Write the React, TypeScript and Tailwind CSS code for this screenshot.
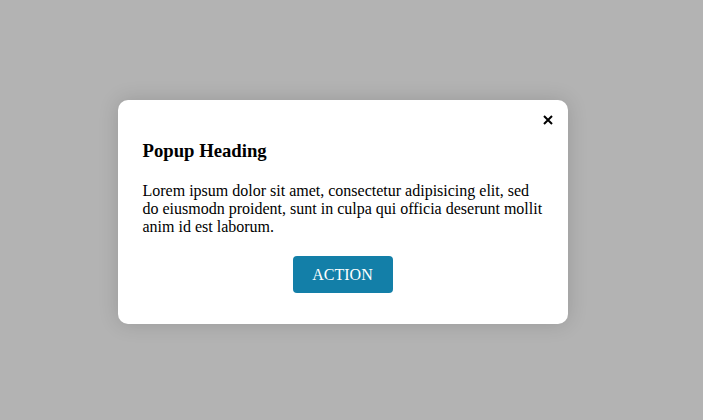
export default function App() {
    return (
        <div className="flex h-[420px] w-full items-center justify-center bg-[#b3b3b3] font-['Liberation_Serif',serif]">
            <div className="relative mb-[-4px] mr-[18px] w-[450px] rounded-[10px] bg-white px-[25px] pb-[31px] pt-[40px] shadow-[0_0_20px_rgba(0,0,0,0.15)]">
                <button className="absolute right-[15px] top-[15px] flex h-[10px] w-[10px] items-center justify-center">
                    <svg width="10" height="10" viewBox="0 0 10 10">
                        <path d="M1 1L9 9M9 1L1 9" stroke="#000" strokeWidth="2" />
                    </svg>
                </button>
                <h3 className="text-[18.72px] font-bold leading-[21.5px] text-black">Popup Heading</h3>
                <p className="mt-[20px] text-[16px] leading-[18.4px] text-black">
                    Lorem ipsum dolor sit amet, consectetur adipisicing elit, sed do eiusmodn proident, sunt in culpa qui officia deserunt mollit anim id est laborum.
                </p>
                <div className="mt-[19px] flex justify-center">
                    <button className="h-[37px] w-[100px] rounded-[4px] bg-[#137fa8] pt-[2px] text-[16px] text-white">ACTION</button>
                </div>
            </div>
        </div>
    );
}
